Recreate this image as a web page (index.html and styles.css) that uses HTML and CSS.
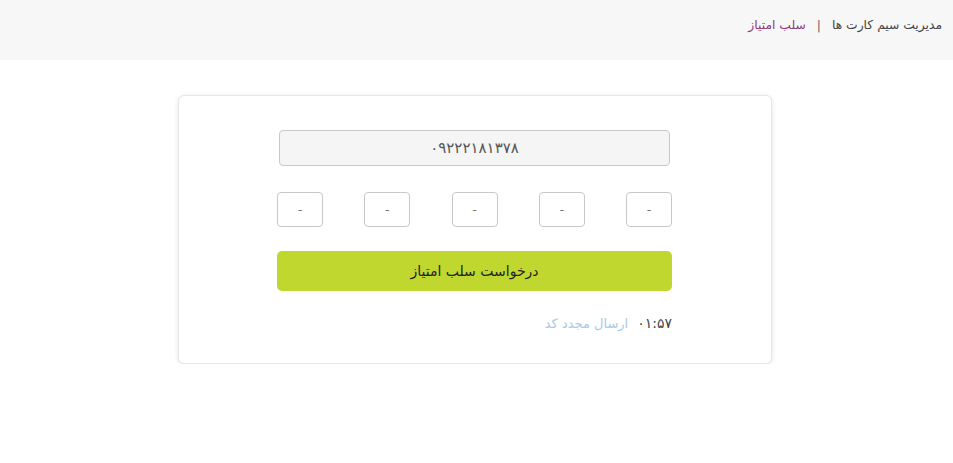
FILE: index.html
```html
<!DOCTYPE html>
<html lang="fa" dir="rtl">
<head>
<meta charset="utf-8">
<link rel="stylesheet" href="styles.css">
</head>
<body>
<header class="topbar">
  <nav class="crumbs">
    <span class="crumb">مدیریت سیم کارت ها</span>
    <span class="sep">|</span>
    <span class="crumb active">سلب امتیاز</span>
  </nav>
</header>
<main class="main">
  <section class="card">
    <div class="phone">۰۹۲۲۲۱۸۱۳۷۸</div>
    <div class="otp">
      <div class="box">-</div>
      <div class="box">-</div>
      <div class="box">-</div>
      <div class="box">-</div>
      <div class="box">-</div>
    </div>
    <button class="submit">درخواست سلب امتیاز</button>
    <div class="timer">
      <span class="time">۰۱:۵۷</span>
      <span class="resend">ارسال مجدد کد</span>
    </div>
  </section>
</main>
</body>
</html>
```
FILE: styles.css
```css
* { box-sizing: border-box; }
html, body {
  margin: 0;
  padding: 0;
  background: #fff;
  font-family: "DejaVu Sans", "Noto Sans", sans-serif;
  color: #333;
}
.topbar {
  height: 60px;
  background: #f8f7f8;
  display: flex;
  align-items: center;
  padding: 0 11px 10px;
}
.crumbs {
  display: flex;
  align-items: center;
  gap: 11px;
  font-size: 12.3px;
  color: #444;
}
.sep { color: #666; }
.crumb.active { color: #8b3b7e; }
.main {
  display: flex;
  justify-content: center;
  padding: 35px 3px 0 0;
}
.card {
  width: 594px;
  height: 269px;
  background: #fff;
  border: 1px solid #e6e6e6;
  border-radius: 6px;
  box-shadow: 0 1px 5px rgba(0,0,0,0.1);
  padding: 34px 99px 0 98px;
  display: flex;
  flex-direction: column;
}
.phone {
  height: 36px;
  margin: 0 2px;
  background: #f5f5f5;
  border: 1px solid #c8c8c8;
  border-radius: 4px;
  display: flex;
  align-items: center;
  justify-content: center;
  font-size: 15px;
  color: #555;
}
.otp {
  display: flex;
  justify-content: space-between;
  margin-top: 26px;
}
.box {
  width: 46px;
  height: 35px;
  border: 1px solid #c8c8c8;
  border-radius: 4px;
  display: flex;
  align-items: center;
  justify-content: center;
  color: #777;
  font-size: 13px;
}
.submit {
  margin-top: 24px;
  height: 40px;
  border: none;
  border-radius: 5px;
  background: #c0d72f;
  font-family: inherit;
  font-size: 14px;
  color: #222;
}
.timer {
  margin-top: 24px;
  display: flex;
  align-items: center;
  gap: 9px;
  font-size: 13px;
}
.time { color: #444; font-size: 14px; }
.resend { color: #a9c9e4; }
```
